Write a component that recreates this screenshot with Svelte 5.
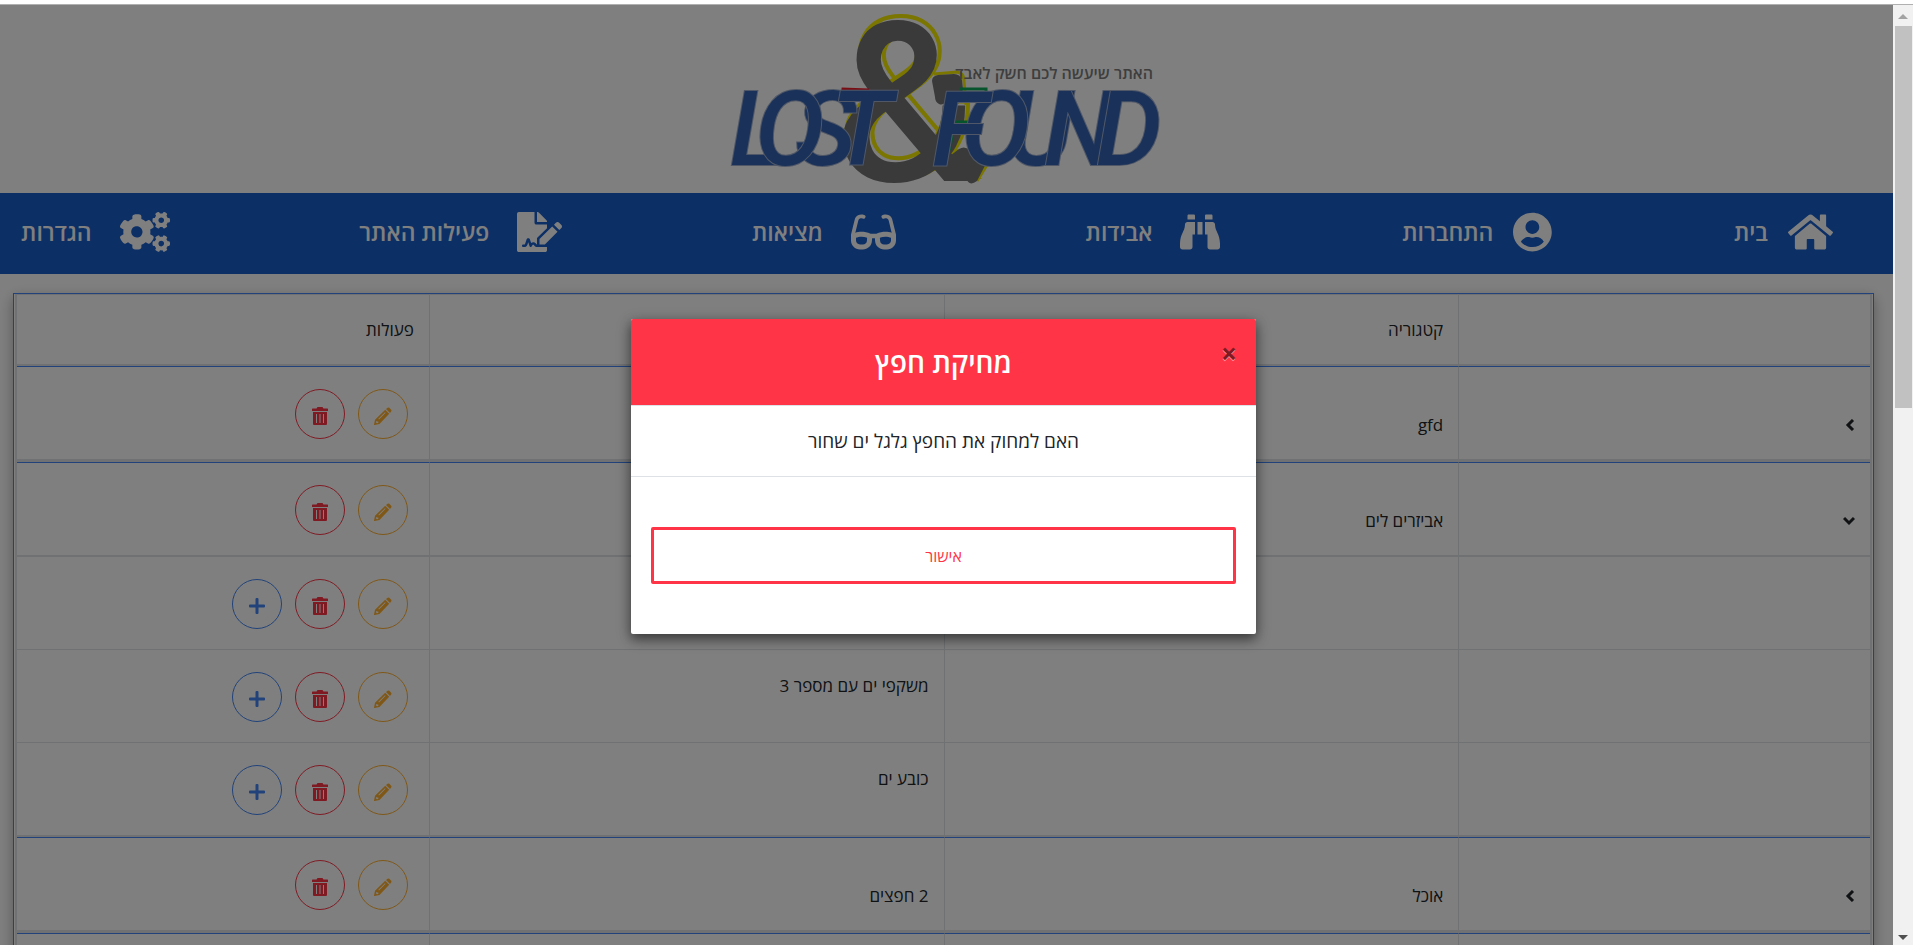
<script>
  const nav = [
    { label: 'בית', w: 576, wide: false, d: 'M488 312.7V456c0 13.3-10.7 24-24 24H348c-6.6 0-12-5.4-12-12V356c0-6.6-5.4-12-12-12h-72c-6.6 0-12 5.4-12 12v112c0 6.6-5.4 12-12 12H112c-13.3 0-24-10.7-24-24V312.7c0-3.6 1.6-7 4.4-9.3l188-154.8c4.4-3.6 10.8-3.6 15.3 0l188 154.8c2.7 2.3 4.3 5.7 4.3 9.3zm83.6-60.9L488 182.9V44.4c0-6.6-5.4-12-12-12h-56c-6.6 0-12 5.4-12 12V117l-89.5-73.7c-17.7-14.6-43.3-14.6-61 0L4.4 251.8c-5.1 4.2-5.8 11.8-1.6 16.9l25.5 31c4.2 5.1 11.8 5.8 16.9 1.6l235.2-193.7c4.4-3.6 10.8-3.6 15.3 0l235.2 193.7c5.1 4.2 12.7 3.5 16.9-1.6l25.5-31c4.2-5.2 3.4-12.7-1.7-16.9z' },
    { label: 'התחברות', w: 496, wide: false, d: 'M248 8C111 8 0 119 0 256s111 248 248 248 248-111 248-248S385 8 248 8zm0 96c48.6 0 88 39.4 88 88s-39.4 88-88 88-88-39.4-88-88 39.4-88 88-88zm0 344c-58.7 0-111.3-26.6-146.5-68.2 18.8-35.4 55.6-59.8 98.5-59.8 2.4 0 4.8.4 7.1 1.1 13 4.2 26.6 6.9 40.9 6.9 14.3 0 28-2.7 40.9-6.9 2.3-.7 4.7-1.1 7.1-1.1 42.9 0 79.7 24.4 98.5 59.8C359.3 421.4 306.7 448 248 448z' },
    { label: 'אבידות', w: 512, wide: true, d: 'M416 48c0-8.84-7.16-16-16-16h-64c-8.84 0-16 7.16-16 16v48h96V48zM63.91 159.99C61.4 253.84 3.46 274.22 0 404v44c0 17.67 14.33 32 32 32h96c17.67 0 32-14.33 32-32V288h32V128H95.84c-17.63 0-31.45 14.37-31.93 31.99zm384.18 0c-.48-17.62-14.3-31.99-31.93-31.99H320v160h32v160c0 17.67 14.33 32 32 32h96c17.67 0 32-14.33 32-32v-44c-3.46-129.78-61.4-150.16-63.91-244.01zM176 32h-64c-8.84 0-16 7.16-16 16v48h96V48c0-8.84-7.16-16-16-16zm48 256h64V128h-64v160z' },
    { label: 'מציאות', w: 576, wide: true, d: 'M574.1 280.37L528.75 98.66c-5.91-23.7-21.59-44.05-43-55.81-21.44-11.73-46.97-14.11-70.19-6.33l-15.25 5.08c-8.39 2.79-12.92 11.86-10.12 20.24l5.06 15.18c2.79 8.38 11.85 12.91 20.23 10.12l13.18-4.39c10.87-3.62 23-3.57 33.16 1.73 10.29 5.37 17.57 14.56 20.37 25.82l38.46 153.82c-22.19-6.81-49.79-12.46-81.2-12.46-34.77 0-73.98 7.02-114.85 26.74h-73.18c-40.87-19.74-80.08-26.75-114.86-26.75-31.42 0-59.02 5.65-81.21 12.46l38.46-153.83c2.79-11.25 10.09-20.45 20.38-25.81 10.16-5.3 22.28-5.35 33.15-1.73l13.17 4.39c8.38 2.79 17.44-1.74 20.23-10.12l5.06-15.18c2.8-8.38-1.73-17.45-10.12-20.24l-15.25-5.08c-23.22-7.78-48.75-5.41-70.19 6.33-21.41 11.77-37.09 32.11-43 55.8L1.9 280.37A64.218 64.218 0 0 0 0 295.86v70.25C0 429.01 51.58 480 115.2 480h37.12c60.28 0 110.37-45.94 114.88-105.37l2.93-38.63h35.75l2.93 38.63C313.31 434.06 363.4 480 423.68 480h37.12c63.62 0 115.2-50.99 115.2-113.88v-70.25c0-5.23-.64-10.43-1.9-15.5zm-370.72 89.42c-1.97 25.91-24.4 46.21-51.06 46.21H115.2C86.97 416 64 393.62 64 366.11v-37.54c18.12-6.49 43.42-12.92 72.58-12.92 23.86 0 47.26 4.33 69.93 12.92l-3.13 41.22zM512 366.12c0 27.51-22.97 49.88-51.2 49.88h-37.12c-26.67 0-49.1-20.3-51.06-46.21l-3.13-41.22c22.67-8.59 46.08-12.92 69.95-12.92 29.12 0 54.43 6.44 72.55 12.93v37.54z' },
    { label: 'פעילות האתר', w: 576, wide: true, d: 'M218.17 424.14c-2.95-5.92-8.09-6.52-10.17-6.52s-7.22.59-10.02 6.19l-7.67 15.34c-6.37 12.78-25.03 11.37-29.48-2.09L144 386.59l-10.61 31.88c-5.89 17.66-22.38 29.53-41 29.53H80c-8.84 0-16-7.16-16-16s7.16-16 16-16h12.39c4.83 0 9.11-3.08 10.64-7.66l18.19-54.64c3.3-9.81 12.44-16.41 22.78-16.41s19.48 6.59 22.77 16.41l13.88 41.64c19.75-16.19 54.06-9.7 66 14.16 1.89 3.78 5.49 5.95 9.36 6.26v-82.12l128-127.09V160H248c-13.2 0-24-10.8-24-24V0H24C10.7 0 0 10.7 0 24v464c0 13.3 10.7 24 24 24h336c13.3 0 24-10.7 24-24v-40l-128-.11c-16.12-.31-30.58-9.28-37.83-23.75zM384 121.9c0-6.3-2.5-12.4-7-16.9L279.1 7c-4.5-4.5-10.6-7-17-7H256v128h128v-6.1zm-96 225.06V416h68.99l161.68-162.78-67.88-67.88L288 346.96zm280.54-179.63l-31.87-31.87c-9.94-9.94-26.07-9.94-36.01 0l-27.25 27.25 67.88 67.88 27.25-27.25c9.95-9.94 9.95-26.07 0-36.01z' },
    { label: 'הגדרות', w: 640, wide: true, d: 'M512.1 191l-8.2 14.3c-3 5.3-9.4 7.5-15.1 5.4-11.8-4.4-22.6-10.7-32.1-18.6-4.6-3.8-5.8-10.5-2.8-15.7l8.2-14.3c-6.9-8-12.3-17.3-15.9-27.4h-16.5c-6 0-11.2-4.3-12.2-10.3-2-12-2.1-24.6 0-37.1 1-6 6.2-10.4 12.2-10.4h16.5c3.6-10.1 9-19.4 15.9-27.4l-8.2-14.3c-3-5.2-1.9-11.9 2.8-15.7 9.5-7.9 20.4-14.2 32.1-18.6 5.7-2.1 12.1.1 15.1 5.4l8.2 14.3c10.5-1.9 21.2-1.9 31.7 0L552 6.3c3-5.3 9.4-7.5 15.1-5.4 11.8 4.4 22.6 10.7 32.1 18.6 4.6 3.8 5.8 10.5 2.8 15.7l-8.2 14.3c6.9 8 12.3 17.3 15.9 27.4h16.5c6 0 11.2 4.3 12.2 10.3 2 12 2.1 24.6 0 37.1-1 6-6.2 10.4-12.2 10.4h-16.5c-3.6 10.1-9 19.4-15.9 27.4l8.2 14.3c3 5.2 1.9 11.9-2.8 15.7-9.5 7.9-20.4 14.2-32.1 18.6-5.7 2.1-12.1-.1-15.1-5.4l-8.2-14.3c-10.4 1.9-21.2 1.9-31.7 0zm-10.5-58.8c38.5 29.6 82.4-14.3 52.8-52.8-38.5-29.7-82.4 14.3-52.8 52.8zM386.3 286.1l33.7 16.8c10.1 5.8 14.5 18.1 10.5 29.1-8.9 24.2-26.4 46.4-42.6 65.8-7.4 8.9-20.2 11.1-30.3 5.3l-29.1-16.8c-16 13.7-34.6 24.6-54.9 31.7v33.6c0 11.6-8.3 21.6-19.7 23.6-24.6 4.2-50.4 4.4-75.9 0-11.5-2-20-11.9-20-23.6V418c-20.3-7.2-38.9-18-54.9-31.7L74 403c-10 5.8-22.9 3.6-30.3-5.3-16.2-19.4-33.3-41.6-42.2-65.7-4-10.9.4-23.2 10.5-29.1l33.3-16.8c-3.9-20.9-3.9-42.4 0-63.4L12 205.8c-10.1-5.8-14.6-18.1-10.5-29 8.9-24.2 26-46.4 42.2-65.8 7.4-8.9 20.2-11.1 30.3-5.3l29.1 16.8c16-13.7 34.6-24.6 54.9-31.7V57.1c0-11.5 8.2-21.5 19.6-23.5 24.6-4.2 50.5-4.4 76-.1 11.5 2 20 11.9 20 23.6v33.6c20.3 7.2 38.9 18 54.9 31.7l29.1-16.8c10-5.8 22.9-3.6 30.3 5.3 16.2 19.4 33.2 41.6 42.1 65.8 4 10.9.1 23.2-10 29.1l-33.7 16.8c3.9 21 3.9 42.5 0 63.5zm-117.6 21.1c59.2-77-28.7-164.9-105.7-105.7-59.2 77 28.7 164.9 105.7 105.7zm243.4 182.7l-8.2 14.3c-3 5.3-9.4 7.5-15.1 5.4-11.8-4.4-22.6-10.7-32.1-18.6-4.6-3.8-5.8-10.5-2.8-15.7l8.2-14.3c-6.9-8-12.3-17.3-15.9-27.4h-16.5c-6 0-11.2-4.3-12.2-10.3-2-12-2.1-24.6 0-37.1 1-6 6.2-10.4 12.2-10.4h16.5c3.6-10.1 9-19.4 15.9-27.4l-8.2-14.3c-3-5.2-1.9-11.9 2.8-15.7 9.5-7.9 20.4-14.2 32.1-18.6 5.7-2.1 12.1.1 15.1 5.4l8.2 14.3c10.5-1.9 21.2-1.9 31.7 0l8.2-14.3c3-5.3 9.4-7.5 15.1-5.4 11.8 4.4 22.6 10.7 32.1 18.6 4.6 3.8 5.8 10.5 2.8 15.7l-8.2 14.3c6.9 8 12.3 17.3 15.9 27.4h16.5c6 0 11.2 4.3 12.2 10.3 2 12 2.1 24.6 0 37.1-1 6-6.2 10.4-12.2 10.4h-16.5c-3.6 10.1-9 19.4-15.9 27.4l8.2 14.3c3 5.2 1.9 11.9-2.8 15.7-9.5 7.9-20.4 14.2-32.1 18.6-5.7 2.1-12.1-.1-15.1-5.4l-8.2-14.3c-10.4 1.9-21.2 1.9-31.7 0zM501.6 431c38.5 29.6 82.4-14.3 52.8-52.8-38.5-29.6-82.4 14.3-52.8 52.8z' }
  ];

  // Logo letters, back to front: the O's lie over their neighbours.
  const letters = [
    { c: 'S', x: 62 },
    { c: 'L', x: -3 },
    { c: 'O', x: 22 },
    { c: 'T', x: 98 },
    { c: 'U', x: 274 },
    { c: 'N', x: 311 },
    { c: 'D', x: 363 },
    { c: 'O', x: 228 },
    { c: 'F', x: 199 }
  ];

  const rows = [
    { kind: 'category', open: false, name: 'gfd', item: '' },
    { kind: 'category', open: true, name: 'אביזרים לים', item: '' },
    { kind: 'item', last: false, item: '' },
    { kind: 'item', last: false, item: 'משקפי ים עם מספר 3' },
    { kind: 'item', last: true, item: 'כובע ים' },
    { kind: 'category', open: false, name: 'אוכל', item: '2 חפצים' },
    { kind: 'category', open: false, name: '', item: '' }
  ];

  let modalOpen = $state(true);
</script>

<div class="window">
  <div class="viewport">
    <div class="page" dir="rtl">
      <header class="brand">
        <svg class="logo" viewBox="0 0 428 188" width="428" height="188" direction="ltr" role="img" aria-label="Lost &amp; Found">
          <g class="amp">
            <text class="amp-outline" x="104" y="172">&amp;</text>
            <path class="outline" d="M201 69 L224 67 Q231 68 231 76 L233 100" />
            <path class="outline" d="M223 145 Q229 150 238 146 L259 152 L244 176" />
            <text class="amp-fill" x="101" y="176">&amp;</text>
            <path class="amp-shape" d="M199 76 Q199 71 205 70 L221 69 Q227 69 229 75 Q232 92 225 99 L213 96 Q210 101 206 99 Q202 97 202 92 Z" />
            <path class="amp-shape" d="M205 160 L226 144 Q232 140 238 146 L256 153 L244 176 Q236 182 233 173 L218 170 Z" />
          </g>
          <path class="red" d="M109 92 L110 84 L136 85 M137 113 L131 142" />
          <path class="green" d="M227 84 H253 V92 M221 117 H237 M219 128 L217 145" />
          {#each letters as l}
            <text class="word" x={l.x} y="160">{l.c}</text>
          {/each}
          <text class="tagline" x="420" y="74" direction="rtl">האתר שיעשה לכם חשק לאבד</text>
        </svg>
      </header>

      <nav class="menu">
        {#each nav as n}
          <a href="#top" class:wide={n.wide}>
            <svg viewBox="0 0 {n.w} 512" height="40" width={n.w / 12.8} aria-hidden="true"><path d={n.d} /></svg>
            <span>{n.label}</span>
          </a>
        {/each}
      </nav>

      <div class="card">
        <table>
          <colgroup><col class="narrow" /><col class="broad" /><col class="broad" /><col class="narrow" /></colgroup>
          <thead>
            <tr><th></th><th>קטגוריה</th><th></th><th>פעולות</th></tr>
          </thead>
          <tbody>
            {#each rows as r}
              <tr class={r.kind} class:open={r.open} class:last={r.last}>
                <td>
                  {#if r.kind === 'category'}
                    <svg class="chevron" viewBox="0 0 12 12" width="12" height="12" aria-hidden="true">
                      <path d={r.open ? 'M1 3 L6 8 L11 3' : 'M10 1 L5 6 L10 11'} />
                    </svg>
                  {/if}
                </td>
                <td>{r.name ?? ''}</td>
                <td>{r.item}</td>
                <td class="actions">
                  <div>
                    <button class="edit" aria-label="עריכה">
                      <svg viewBox="0 0 18 18" width="18" height="18"><path fill-rule="evenodd" d="M12 2 L13.500.800 Q14.500.100 15.300.800 L17.200 2.800 Q17.900 3.600 17.200 4.400 L16 6ZM11.200 2.800 L15.200 6.800 L5.500 17 L.500 18 Q0 18 0 17.500 L1 12.700Zm-.200 2.400 L4.400 11.800 L5 12.400 L11.600 5.800Zm-8.700 8.900 L1.800 15.200 L2.900 16.300 L4.300 15.900 V14.500 H3Z" /></svg>
                    </button>
                    <button class="remove" aria-label="מחיקה">
                      <svg viewBox="0 0 18 18" width="18" height="18"><path fill-rule="evenodd" d="M1 2 Q1 1.500 1.500 1.500 H5.500 L6.500 0 H11.500 L12.500 1.500 H16.500 Q17 1.500 17 2 V4 H1ZM2 5 H16 V17 Q16 18 15 18 H3 Q2 18 2 17ZM5 7 V16 H6 V7ZM8.500 7 V16 H9.500 V7ZM12 7 V16 H13 V7Z" /></svg>
                    </button>
                    {#if r.kind === 'item'}
                      <button class="add" aria-label="הוספה">
                        <svg viewBox="0 0 18 18" width="18" height="18"><path d="M8.500 1 H9.500 Q10.500 1 10.500 2 V7.500 H16 Q17 7.500 17 8.500 V9.500 Q17 10.500 16 10.500 H10.500 V16 Q10.500 17 9.500 17 H8.500 Q7.500 17 7.500 16 V10.500 H2 Q1 10.500 1 9.500 V8.500 Q1 7.500 2 7.500 H7.500 V2 Q7.500 1 8.500 1Z" /></svg>
                      </button>
                    {/if}
                  </div>
                </td>
              </tr>
            {/each}
          </tbody>
        </table>
      </div>
    </div>

    {#if modalOpen}
      <div class="backdrop" dir="rtl">
        <div class="modal" role="dialog" aria-modal="true" aria-labelledby="modal-title">
          <div class="modal-header">
            <h4 id="modal-title">מחיקת חפץ</h4>
            <button class="close" aria-label="סגירה" onclick={() => (modalOpen = false)}>×</button>
          </div>
          <p class="modal-body">האם למחוק את החפץ גלגל ים שחור</p>
          <div class="modal-footer">
            <button class="confirm" onclick={() => (modalOpen = false)}>אישור</button>
          </div>
        </div>
      </div>
    {/if}
  </div>

  <div class="scrollbar" aria-hidden="true">
    <svg viewBox="0 0 10 5" width="10" height="5"><path d="M5 0 L10 5 H0Z" fill="#a3a3a3" /></svg>
    <div class="track"><div class="thumb"></div></div>
    <svg viewBox="0 0 10 5" width="10" height="5"><path d="M0 0 H10 L5 5Z" fill="#505050" /></svg>
  </div>
</div>

<style>
  :global(body) {
    margin: 0;
    background: #fff;
  }
  .window {
    box-sizing: border-box;
    height: 100vh;
    border-top: 4px solid #fff;
    box-shadow: inset 0 1px #b0b0b0;
    padding-top: 1px;
    display: flex;
    overflow: hidden;
    font-family: 'Open Sans', 'Liberation Sans', sans-serif;
    color: #212529;
  }
  .viewport {
    position: relative;
    flex: 1;
    min-width: 0;
    overflow: hidden;
  }
  .brand {
    display: flex;
    justify-content: center;
  }
  .logo {
    display: block;
    overflow: visible;
  }
  .amp text {
    font-family: Roboto, sans-serif;
    font-weight: 500;
    font-size: 222px;
  }
  .amp-fill,
  .amp-shape {
    fill: #757575;
  }
  .amp-outline {
    fill: none;
    stroke: #f6ec00;
    stroke-width: 4px;
  }
  .outline,
  .red,
  .green {
    fill: none;
    stroke: #f6ec00;
    stroke-width: 3px;
  }
  .red {
    stroke: #f01c28;
  }
  .green {
    stroke: #0aa858;
  }
  .word {
    font-family: Roboto, sans-serif;
    font-style: italic;
    font-weight: 500;
    font-size: 104px;
    fill: #3462b2;
    stroke: #a0b0d0;
    stroke-width: 2px;
    paint-order: stroke;
  }
  .tagline {
    font-size: 16px;
    font-weight: 600;
    fill: #7c7c7c;
  }

  .menu {
    box-sizing: border-box;
    display: flex;
    justify-content: space-between;
    align-items: center;
    min-height: 81px;
    padding: 0 60px 3px 13px;
    background: #185ecc;
  }
  .menu a {
    display: flex;
    align-items: center;
    gap: 20px;
    color: #fff;
    font-size: 23px;
    font-weight: 600;
    line-height: 32px;
    text-decoration: none;
    white-space: nowrap;
  }
  .menu a.wide {
    gap: 28px;
    padding-left: 8px;
  }
  .menu svg {
    fill: #fff;
  }

  .card {
    margin: 19px 19px 19px 13px;
    padding: 0 1px;
    border: 1px solid #4285f4;
    box-shadow: 0 5px 11px rgba(0, 0, 0, 0.18), 0 4px 15px rgba(0, 0, 0, 0.15);
  }
  table {
    width: 100%;
    table-layout: fixed;
    border-collapse: separate;
    border-spacing: 0;
    border: solid #dee2e6;
    border-width: 1px 2px;
    font-size: 17px;
    line-height: 24px;
  }
  .narrow {
    width: 40px;
  }
  .broad {
    width: 50px;
  }
  th,
  td {
    box-sizing: border-box;
    text-align: right;
    vertical-align: top;
    padding: 0 15px 0 0;
    border-left: 1px solid #dee2e6;
    font-weight: 400;
  }
  th:last-child,
  td:last-child {
    border-left: 0;
  }
  th {
    height: 71px;
    vertical-align: middle;
    border-bottom: 2px solid #dee2e6;
  }
  .category td {
    height: 96px;
    padding-top: 46px;
    border-top: 1px solid #4285f4;
    border-bottom: 3px solid #dee2e6;
  }
  .category.open td {
    height: 95px;
    border-bottom-width: 2px;
  }
  .item td {
    height: 93px;
    padding-top: 24px;
    border-bottom: 1px solid #dee2e6;
  }
  .item.last td {
    height: 94px;
    border-bottom-width: 2px;
  }
  .chevron {
    display: block;
    margin-top: 6px;
  }
  .chevron path {
    fill: none;
    stroke: #212529;
    stroke-width: 3px;
  }
  tbody td.actions {
    padding: 22px 21px 0 0;
  }
  .actions div {
    display: flex;
    gap: 13px;
  }
  .actions button {
    box-sizing: border-box;
    width: 50px;
    height: 50px;
    padding: 4px 0 0;
    border: 1px solid currentColor;
    border-radius: 50%;
    background: transparent;
    display: grid;
    place-items: center;
  }
  .actions svg {
    display: block;
    fill: currentColor;
  }
  .edit {
    color: #ffb030;
  }
  .remove {
    color: #ff3547;
  }
  .add {
    color: #4285f4;
  }

  .backdrop {
    position: absolute;
    inset: 0;
    display: flex;
    align-items: center;
    justify-content: center;
    padding: 3px 6px 0 0;
    background: rgba(0, 0, 0, 0.5);
  }
  .modal {
    width: 90%;
    max-width: 625px;
    border-radius: 2px;
    overflow: hidden;
    background: #fff;
    box-shadow: 0 5px 11px rgba(0, 0, 0, 0.36), 0 4px 15px rgba(0, 0, 0, 0.3);
    text-align: center;
  }
  .modal-header {
    position: relative;
    padding: 22px 20px;
    background: #ff3547;
    border-bottom: 1px solid #dee2e6;
  }
  h4 {
    margin: 0;
    color: #fff;
    font-size: 28px;
    font-weight: 600;
    line-height: 42px;
  }
  .close {
    position: absolute;
    top: 20px;
    right: 16px;
    padding: 0 3px;
    border: 0;
    background: none;
    color: #000;
    font: 700 28px/28px 'Open Sans', sans-serif;
    text-shadow: 0 1px 0 #fff;
    opacity: 0.5;
  }
  .modal-body {
    margin: 0;
    padding: 20px;
    font-size: 19px;
    line-height: 30px;
    border-bottom: 1px solid #dee2e6;
  }
  .modal-footer {
    padding: 50px 20px;
  }
  .confirm {
    box-sizing: border-box;
    display: block;
    width: 100%;
    min-height: 57px;
    border: 3px solid #ff3547;
    border-radius: 2px;
    background: #fff;
    color: #ff3547;
    font-family: inherit;
    font-size: 16px;
  }

  .scrollbar {
    width: 20px;
    flex: none;
    display: flex;
    flex-direction: column;
    align-items: center;
    padding: 9px 0 5px;
    box-sizing: border-box;
    background: #f1f1f1;
  }
  .track {
    flex: 1;
    width: 17px;
    padding: 7px 0;
    margin-left: 1px;
    display: grid;
    grid-template-rows: 11fr 15fr;
  }
  .thumb {
    background: #c1c1c1;
  }
</style>
